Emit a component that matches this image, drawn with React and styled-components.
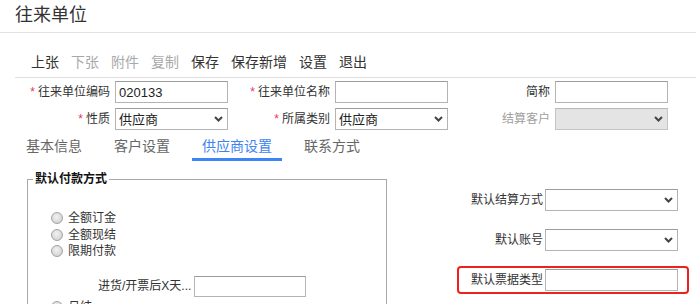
import React from 'react';
import styled, { createGlobalStyle } from 'styled-components';

const GlobalStyle = createGlobalStyle`
  html, body {
    margin: 0;
    padding: 0;
    overflow: hidden;
    background: #fff;
  }
  body {
    font-family: "Liberation Sans", "Noto Sans CJK SC", sans-serif;
    color: #333;
  }
`;

const Page = styled.div`
  width: 696px;
  height: 304px;
  overflow: hidden;
`;

const TitleBar = styled.div`
  height: 30px;
  padding: 0 0 2px 15px;
  display: flex;
  align-items: center;
  border-bottom: 1px solid #e2e2e2;
  font-size: 18px;
  line-height: 20px;
  color: #333;
`;

const Toolbar = styled.div`
  margin-left: 15px;
  height: 45px;
  box-sizing: border-box;
  padding: 0 0 7px 16px;
  display: flex;
  align-items: flex-end;
  gap: 12px;
  border-bottom: 1px solid #dedede;
`;

const ToolButton = styled.span`
  font-size: 14px;
  line-height: 16px;
  color: ${p => (p.disabled ? '#a9a9a9' : '#333')};
  cursor: pointer;
`;

// header form: two rows of label + control pairs
const Form = styled.div`
  padding: 3px 0 0 15px;
  display: flex;
  flex-direction: column;
  gap: 5px;
`;

const FormRow = styled.div`
  display: flex;
`;

const Field = styled.div`
  display: flex;
  align-items: center;
`;

const Label = styled.label`
  width: ${p => p.width}px;
  margin-right: 5px;
  text-align: right;
  font-size: 12px;
  line-height: 14px;
  color: ${p => (p.muted ? '#a0a0a0' : '#333')};
  white-space: nowrap;
`;

const Star = styled.span`
  color: #e8345a;
  margin-right: 3px;
`;

const TextInput = styled.input`
  width: ${p => p.width || 113}px;
  height: ${p => p.height || 22}px;
  box-sizing: border-box;
  margin: 0;
  padding: 0 3px;
  border: 1px solid #b4b4b4;
  border-top-color: #9c9c9c;
  border-radius: 0;
  font-family: inherit;
  font-size: 13px;
  color: #222;
  background: #fff;
  outline: none;
`;

const SelectWrap = styled.div`
  position: relative;
  width: ${p => p.width || 113}px;
  height: 22px;
`;

const NativeSelect = styled.select`
  appearance: none;
  width: 100%;
  height: 100%;
  box-sizing: border-box;
  margin: 0;
  padding: 0 3px;
  border: 1px solid ${p => (p.disabled ? '#c4c4c4' : '#b4b4b4')};
  border-top-color: ${p => (p.disabled ? '#b8b8b8' : '#9c9c9c')};
  border-radius: 0;
  background: ${p => (p.disabled ? '#e4e4e4' : '#fff')};
  font-family: inherit;
  font-size: 13px;
  color: #222;
  outline: none;
  opacity: 1;
`;

const Chevron = styled.svg`
  position: absolute;
  right: 5px;
  top: 50%;
  transform: translateY(-50%);
  pointer-events: none;
`;

function Select({ value, width, disabled }) {
  return (
    <SelectWrap width={width}>
      <NativeSelect disabled={disabled} defaultValue={value}>
        <option value={value}>{value}</option>
      </NativeSelect>
      <Chevron width="9" height="6" viewBox="0 0 9 6">
        <path d="M1 1 L4.5 4.5 L8 1" fill="none" stroke="#444" strokeWidth="2" />
      </Chevron>
    </SelectWrap>
  );
}

const Tabs = styled.div`
  display: flex;
  gap: 12px;
  padding-left: 16px;
  margin-top: 8px;
`;

const Tab = styled.div`
  padding: 0 10px 4px;
  font-size: 14px;
  line-height: 16px;
  color: ${p => (p.active ? '#3d84ef' : '#666')};
  border-bottom: 3px solid ${p => (p.active ? '#3b86f4' : 'transparent')};
  cursor: pointer;
`;

const Panel = styled.div`
  margin-top: 11px;
  padding-left: 27px;
  display: flex;
  gap: 70px;
`;

const GroupBox = styled.fieldset`
  margin: 0;
  padding: 0;
  width: 360px;
  height: 220px;
  box-sizing: border-box;
  min-width: 0;
  border: 1px solid #a8a8a8;
`;

const Legend = styled.legend`
  margin-left: 5px;
  padding: 0 2px;
  font-size: 12px;
  line-height: 14px;
  font-weight: bold;
  color: #111;
`;

const RadioList = styled.div`
  padding: 24px 0 0 23px;
`;

const RadioRow = styled.label`
  display: flex;
  align-items: center;
  gap: 5px;
  height: 16.5px;
  margin-top: ${p => p.gapTop || 0}px;
  font-size: 12px;
  line-height: 14px;
  color: #333;
`;

const RadioDot = styled.span`
  width: 12px;
  height: 12px;
  box-sizing: border-box;
  border-radius: 50%;
  border: 1px solid #a3a3a3;
  background: radial-gradient(circle at 45% 40%, #f2f2f2 0%, #dcdcdc 55%, #c6c6c6 100%);
`;

const TermRow = styled.div`
  display: flex;
  align-items: center;
  gap: 3px;
  margin: 16px 0 0 47px;
  font-size: 12px;
  line-height: 14px;
  color: #333;
`;

const SideCol = styled.div`
  width: 221px;
  padding-top: 17px;
  display: flex;
  flex-direction: column;
  gap: 18px;
`;

const SideRow = styled.div`
  position: relative;
  display: grid;
  grid-template-columns: 86px 133px;
  column-gap: 2px;
  align-items: center;

  ${p =>
    p.highlight &&
    `
    &::after {
      content: '';
      position: absolute;
      top: -3px;
      bottom: -3px;
      left: 0;
      right: -11px;
      border: 2px solid #ee2020;
      border-radius: 4px;
      pointer-events: none;
    }
  `}
`;

const SideLabel = styled.label`
  text-align: right;
  font-size: 12px;
  line-height: 14px;
  color: #333;
  white-space: nowrap;
`;

const toolbarItems = [
  { text: '上张' },
  { text: '下张', disabled: true },
  { text: '附件', disabled: true },
  { text: '复制', disabled: true },
  { text: '保存' },
  { text: '保存新增' },
  { text: '设置' },
  { text: '退出' },
];

const tabs = ['基本信息', '客户设置', '供应商设置', '联系方式'];

const payModes = ['全额订金', '全额现结', '限期付款'];

export default function App() {
  return (
    <Page>
      <GlobalStyle />
      <TitleBar>往来单位</TitleBar>

      <Toolbar>
        {toolbarItems.map(item => (
          <ToolButton key={item.text} disabled={item.disabled}>
            {item.text}
          </ToolButton>
        ))}
      </Toolbar>

      <Form>
        <FormRow>
          <Field>
            <Label width={95}><Star>*</Star>往来单位编码</Label>
            <TextInput defaultValue="020133" />
          </Field>
          <Field>
            <Label width={102}><Star>*</Star>往来单位名称</Label>
            <TextInput defaultValue="" />
          </Field>
          <Field>
            <Label width={102}>简称</Label>
            <TextInput defaultValue="" />
          </Field>
        </FormRow>
        <FormRow>
          <Field>
            <Label width={95}><Star>*</Star>性质</Label>
            <Select value="供应商" />
          </Field>
          <Field>
            <Label width={102}><Star>*</Star>所属类别</Label>
            <Select value="供应商" />
          </Field>
          <Field>
            <Label width={102} muted>结算客户</Label>
            <Select value="" disabled />
          </Field>
        </FormRow>
      </Form>

      <Tabs>
        {tabs.map(t => (
          <Tab key={t} active={t === '供应商设置'}>{t}</Tab>
        ))}
      </Tabs>

      <Panel>
        <GroupBox>
          <Legend>默认付款方式</Legend>
          <RadioList>
            {payModes.map(m => (
              <RadioRow key={m}>
                <RadioDot />
                {m}
              </RadioRow>
            ))}
            <TermRow>
              进货/开票后X天...
              <TextInput width={112} height={21} defaultValue="" />
            </TermRow>
            <RadioRow gapTop={2}>
              <RadioDot />
              月结
            </RadioRow>
          </RadioList>
        </GroupBox>

        <SideCol>
          <SideRow>
            <SideLabel>默认结算方式</SideLabel>
            <Select value="" width={133} />
          </SideRow>
          <SideRow>
            <SideLabel>默认账号</SideLabel>
            <Select value="" width={133} />
          </SideRow>
          <SideRow highlight>
            <SideLabel>默认票据类型</SideLabel>
            <TextInput width={133} defaultValue="" />
          </SideRow>
        </SideCol>
      </Panel>
    </Page>
  );
}
